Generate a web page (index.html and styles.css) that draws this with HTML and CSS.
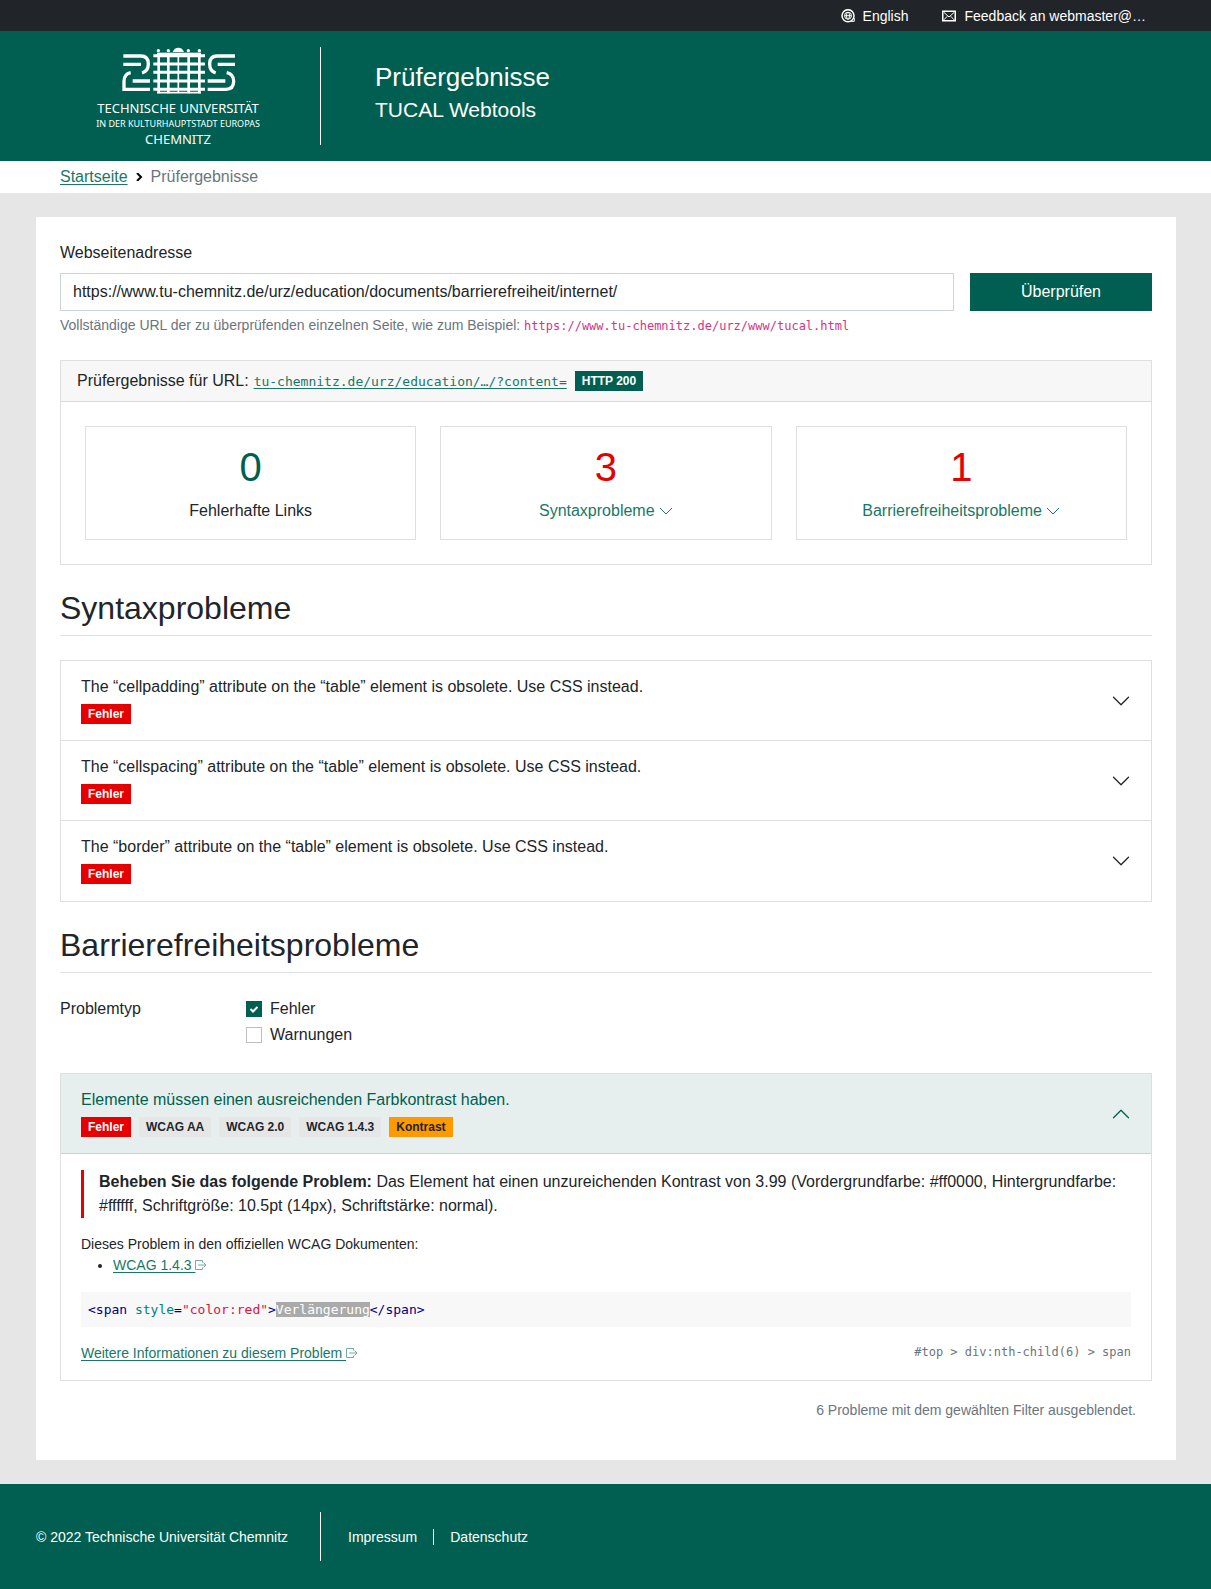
FILE: index.html
```html
<!DOCTYPE html>
<html lang="de">
<head>
    <meta charset="UTF-8">
    <meta name="viewport" content="width=device-width, initial-scale=1">
    <title>Prüfergebnisse | TUCAL Webtools</title>
    <link rel="stylesheet" href="styles.css">
</head>
<body>
<nav class="topbar">
    <a href="#en">
        <svg width="14" height="14" viewBox="0 0 14 14" fill="none" stroke="currentColor">
            <circle cx="7" cy="6.7" r="6" stroke-width="1.5"/>
            <circle cx="7" cy="6.7" r="3.5"/>
            <ellipse cx="7" cy="6.7" rx="1.5" ry="3.5"/>
            <path d="M3.5 6.7h7M9.5 12.3h3.8V9"/>
        </svg>
        English
    </a>
    <a href="#feedback">
        <svg width="14" height="12" viewBox="0 0 14 12" fill="none" stroke="currentColor">
            <rect x=".75" y="1.25" width="12.5" height="9.5" stroke-width="1.5"/>
            <path d="M2 2.5l5 4.5 5-4.5M2 9.8l3.2-3.5M12 9.8L8.8 6.3"/>
        </svg>
        Feedback an webmaster@…
    </a>
</nav>
<header class="header">
    <a class="logo" href="#home">
        <svg width="115" height="47" viewBox="120 49 345 141" fill="none" stroke="#fff" stroke-width="10">
            <path d="M127 76H180Q202 76 202 100Q202 121 183 127M127 101H180M149 126Q129 130 129 152V176H207M155 151H207"/>
            <path d="M217 75H372M217 100H372M217 125H372M217 151H372M217 176H372" stroke-width="9"/>
            <path d="M233 71V188M262 71V188M323 71V188M355 71V188" stroke-width="8"/>
            <path d="M292 71V188M228 186H360" stroke-width="5"/>
            <path d="M462 76H408Q386 76 386 100Q386 121 404 127M410 101H462M437 126Q458 130 458 152Q458 176 435 176H380M380 151H433"/>
            <g fill="#fff" stroke="none">
                <circle cx="232" cy="60" r="5"/>
                <circle cx="262" cy="60" r="5"/>
                <circle cx="322" cy="60" r="5"/>
                <circle cx="355" cy="60" r="5"/>
                <path d="M275 64Q280 51 292 51Q304 51 309 64Z"/>
                <rect x="228" y="66" width="132" height="9"/>
            </g>
        </svg>
        <span class="logo-name">TECHNISCHE UNIVERSITÄT</span>
        <span class="logo-sub">IN DER KULTURHAUPTSTADT EUROPAS</span>
        <span class="logo-name">CHEMNITZ</span>
    </a>
    <div class="header-title">
        <h1>Prüfergebnisse</h1>
        <p>TUCAL Webtools</p>
    </div>
</header>
<nav class="breadcrumb">
    <a href="#start">Startseite</a>
    <svg width="7" height="8" viewBox="0 0 7 8" fill="none" stroke="#000" stroke-width="2"><path d="M1 0l4 4-4 4"/></svg>
    <span>Prüfergebnisse</span>
</nav>

<main class="main">
    <form class="check-form">
        <label for="url">Webseitenadresse</label>
        <div class="check-row">
            <input type="text" id="url" value="https://www.tu-chemnitz.de/urz/education/documents/barrierefreiheit/internet/">
            <button type="button">Überprüfen</button>
        </div>
        <p class="help">Vollständige URL der zu überprüfenden einzelnen Seite, wie zum Beispiel: <code>https://www.tu-chemnitz.de/urz/www/tucal.html</code></p>
    </form>

    <section class="card">
        <div class="card-header">
            <span>Prüfergebnisse für URL:</span>
            <a href="#result"><code>tu-chemnitz.de/urz/education/…/?content=</code></a>
            <span class="badge badge-success">HTTP 200</span>
        </div>
        <div class="stats">
            <div class="stat">
                <div class="number ok">0</div>
                <div>Fehlerhafte Links</div>
            </div>
            <div class="stat">
                <div class="number">3</div>
                <a href="#syntax">Syntaxprobleme <svg width="14" height="14" viewBox="0 0 14 14" fill="none" stroke="currentColor"><path d="M1 4l6 6 6-6"/></svg></a>
            </div>
            <div class="stat">
                <div class="number">1</div>
                <a href="#a11y">Barrierefreiheitsprobleme <svg width="14" height="14" viewBox="0 0 14 14" fill="none" stroke="currentColor"><path d="M1 4l6 6 6-6"/></svg></a>
            </div>
        </div>
    </section>

    <h2 id="syntax">Syntaxprobleme</h2>
    <div class="accordion">
        <button type="button" class="accordion-button">
            <span>
                <span class="accordion-title">The “cellpadding” attribute on the “table” element is obsolete. Use CSS instead.</span>
                <span class="badges"><span class="badge badge-danger">Fehler</span></span>
            </span>
            <svg width="20" height="20" viewBox="0 0 16 16" fill="none" stroke="currentColor" stroke-linecap="round" stroke-linejoin="round"><path d="M2 5l6 6 6-6"/></svg>
        </button>
        <button type="button" class="accordion-button">
            <span>
                <span class="accordion-title">The “cellspacing” attribute on the “table” element is obsolete. Use CSS instead.</span>
                <span class="badges"><span class="badge badge-danger">Fehler</span></span>
            </span>
            <svg width="20" height="20" viewBox="0 0 16 16" fill="none" stroke="currentColor" stroke-linecap="round" stroke-linejoin="round"><path d="M2 5l6 6 6-6"/></svg>
        </button>
        <button type="button" class="accordion-button">
            <span>
                <span class="accordion-title">The “border” attribute on the “table” element is obsolete. Use CSS instead.</span>
                <span class="badges"><span class="badge badge-danger">Fehler</span></span>
            </span>
            <svg width="20" height="20" viewBox="0 0 16 16" fill="none" stroke="currentColor" stroke-linecap="round" stroke-linejoin="round"><path d="M2 5l6 6 6-6"/></svg>
        </button>
    </div>

    <h2 id="a11y">Barrierefreiheitsprobleme</h2>
    <div class="filter" role="group" aria-labelledby="filter-label">
        <span id="filter-label">Problemtyp</span>
        <div class="filter-options">
            <label><input type="checkbox" checked> Fehler</label>
            <label><input type="checkbox"> Warnungen</label>
        </div>
    </div>
    <div class="accordion">
        <button type="button" class="accordion-button open">
            <span>
                <span class="accordion-title">Elemente müssen einen ausreichenden Farbkontrast haben.</span>
                <span class="badges">
                    <span class="badge badge-danger">Fehler</span>
                    <span class="badge badge-light">WCAG AA</span>
                    <span class="badge badge-light">WCAG 2.0</span>
                    <span class="badge badge-light">WCAG 1.4.3</span>
                    <span class="badge badge-warning">Kontrast</span>
                </span>
            </span>
            <svg width="20" height="20" viewBox="0 0 16 16" fill="none" stroke="currentColor" stroke-linecap="round" stroke-linejoin="round"><path d="M2 11l6-6 6 6"/></svg>
        </button>
        <div class="accordion-body">
            <p class="callout"><strong>Beheben Sie das folgende Problem:</strong> Das Element hat einen unzureichenden Kontrast von 3.99 (Vordergrundfarbe: #ff0000, Hintergrundfarbe: #ffffff, Schriftgröße: 10.5pt (14px), Schriftstärke: normal).</p>
            <div class="docs">
                Dieses Problem in den offiziellen WCAG Dokumenten:
                <ul>
                    <li><a href="#wcag">WCAG 1.4.3 </a><svg width="12" height="10" viewBox="0 0 12 10" fill="none" stroke="currentColor"><path d="M7.5 2.5V.5h-7v9h7v-2M3 5h8M8.5 2.5L11 5 8.5 7.5"/></svg></li>
                </ul>
            </div>
            <pre class="code"><span class="tag">&lt;span</span> <span class="attr">style</span>=<span class="str">"color:red"</span><span class="tag">&gt;</span><mark>Verlängerung</mark><span class="tag">&lt;/span&gt;</span></pre>
            <div class="more">
                <span><a href="#more">Weitere Informationen zu diesem Problem </a><svg width="12" height="10" viewBox="0 0 12 10" fill="none" stroke="currentColor"><path d="M7.5 2.5V.5h-7v9h7v-2M3 5h8M8.5 2.5L11 5 8.5 7.5"/></svg></span>
                <code>#top &gt; div:nth-child(6) &gt; span</code>
            </div>
        </div>
    </div>
    <p class="hidden-count">6 Probleme mit dem gewählten Filter ausgeblendet.</p>
</main>

<footer class="footer">
    <div class="copyright">© 2022 Technische Universität Chemnitz</div>
    <a href="#impressum">Impressum</a>
    <a href="#datenschutz">Datenschutz</a>
</footer>
</body>
</html>
```
FILE: styles.css
```css
* {
    box-sizing: border-box;
}
body {
    margin: 0;
    background-color: #e6e6e6;
    color: #212529;
    font-family: "Liberation Sans", Arial, sans-serif;
    font-size: 16px;
    line-height: 24px;
}
h1, h2, p, ul, pre {
    margin: 0;
    font-weight: normal;
}
a {
    color: #177867;
    text-underline-offset: 2px;
}
input, button {
    font: inherit;
    color: inherit;
    border-radius: 0;
}
code, pre {
    font-family: "DejaVu Sans Mono", monospace;
    font-size: 13px;
}
code {
    line-height: 1;
}

.topbar {
    display: flex;
    justify-content: flex-end;
    align-items: center;
    gap: 34px;
    height: 31px;
    padding: 0 65px;
    background-color: #212529;
    font-size: 14px;
}
.topbar a {
    display: flex;
    align-items: center;
    gap: 8px;
    color: #fff;
    text-decoration: none;
}

.header {
    display: flex;
    align-items: flex-start;
    padding: 16px 36px;
    background-color: #005f50;
    color: #fff;
}
.logo {
    display: flex;
    flex-direction: column;
    align-items: center;
    width: 285px;
    height: 98px;
    border-right: 1px solid #fff;
    color: #fff;
    font-family: "Noto Sans", sans-serif;
    text-decoration: none;
}
.logo svg {
    flex: none;
    margin-bottom: 6px;
}
.logo-name {
    font-size: 13px;
    line-height: 17px;
}
.logo-sub {
    font-size: 9px;
    line-height: 14px;
}
.header-title {
    padding: 14px 0 0 54px;
}
.header-title h1 {
    font-size: 26px;
    line-height: 32px;
}
.header-title p {
    font-size: 21px;
    line-height: 33px;
}

.breadcrumb {
    display: flex;
    align-items: center;
    gap: 8px;
    padding: 4px 60px;
    background-color: #fff;
    color: #6c757d;
}

.main {
    margin: 24px 35px 24px 36px;
    padding: 24px 24px 39px;
    background-color: #fff;
}
.check-form label {
    display: block;
    margin-bottom: 8px;
}
.check-row {
    display: grid;
    grid-template-columns: 5fr 1fr;
    gap: 16px;
}
.check-row input {
    height: 38px;
    padding: 6px 12px;
    border: 1px solid #ced4da;
}
.check-row button {
    min-width: 182px;
    border: 0;
    background-color: #005f50;
    color: #fff;
}
.help {
    margin: 4px 0 24px;
    color: #6c757d;
    font-size: 14px;
    line-height: 21px;
}
.help code {
    color: #d63384;
    font-size: 12px;
}

.card {
    border: 1px solid #dfdfdf;
}
.card-header {
    display: flex;
    align-items: center;
    padding: 8px 16px;
    border-bottom: 1px solid #d8d8d8;
    background-color: #f7f7f7;
}
.card-header a {
    margin: 0 8px 0 5px;
}
.stats {
    display: grid;
    grid-template-columns: repeat(3, 1fr);
    gap: 24px;
    padding: 24px;
}
.stat {
    padding: 16px;
    border: 1px solid #dfdfdf;
    text-align: center;
}
.stat a {
    text-decoration: none;
}
.stat svg {
    vertical-align: -2px;
}
.number {
    margin-bottom: 8px;
    color: #e60000;
    font-size: 40px;
    line-height: 48px;
}
.number.ok {
    color: #005f50;
}

h2 {
    margin: 24px 0;
    padding-bottom: 8px;
    border-bottom: 1px solid #dee2e6;
    font-size: 32px;
    line-height: 38px;
}

.badges {
    display: flex;
    gap: 8px;
}
.badge {
    padding: 4px 7px;
    font-size: 12px;
    font-weight: bold;
    line-height: 12px;
}
.badge-success {
    background-color: #005f50;
    color: #fff;
}
.badge-danger {
    background-color: #e60000;
    color: #fff;
}
.badge-light {
    background-color: #e6e6e6;
    color: #212529;
}
.badge-warning {
    background-color: #ff9900;
    color: #212529;
}

.accordion {
    border: 1px solid #dfdfdf;
}
.accordion-button {
    display: flex;
    justify-content: space-between;
    align-items: center;
    width: 100%;
    padding: 16px 20px;
    border: 0;
    background-color: #fff;
    text-align: left;
}
.accordion-button + .accordion-button {
    border-top: 1px solid #dfdfdf;
}
.accordion-button:last-child {
    padding-bottom: 17px;
}
.accordion-button.open {
    border-bottom: 1px solid #c6d3d1;
    background-color: #e6efed;
    color: #005f50;
}
.accordion-title {
    display: block;
    margin-bottom: 8px;
    line-height: 19px;
}
.accordion-body {
    padding: 16px 20px;
    font-size: 14px;
    line-height: 21px;
}
.accordion-body svg {
    color: #74ac9f;
}

.filter {
    display: flex;
    margin-bottom: 24px;
}
.filter > span {
    width: 186px;
}
.filter label {
    display: flex;
    align-items: center;
    gap: 8px;
    margin-bottom: 2px;
}
.filter input {
    appearance: none;
    width: 16px;
    height: 16px;
    margin: 0;
    border: 1px solid #bfbfbf;
}
.filter input:checked {
    border-color: #005f50;
    background: #005f50 url("data:image/svg+xml,%3Csvg xmlns='http://www.w3.org/2000/svg' viewBox='0 0 14 14'%3E%3Cpath d='M3.5 7l2.5 2.5 4.5-4.5' fill='none' stroke='white' stroke-width='2'/%3E%3C/svg%3E");
}

.callout {
    margin-bottom: 16px;
    padding-left: 15px;
    border-left: 3px solid #e60000;
    font-size: 16px;
    line-height: 24px;
}
.docs ul {
    padding-left: 32px;
}
.code {
    margin: 16px 0;
    padding: 7px;
    background-color: #f8f8f8;
    color: #000080;
}
.code .attr {
    color: #008080;
}
.code .str {
    color: #dd1144;
}
.code mark {
    background-color: #aaa;
    color: #fff;
}
.more {
    display: flex;
    justify-content: space-between;
}
.more code {
    color: #6c757d;
    font-size: 12px;
    line-height: 18px;
}
.hidden-count {
    padding: 19px 16px 0;
    color: #6c757d;
    font-size: 14px;
    line-height: 21px;
    text-align: right;
}

.footer {
    display: flex;
    align-items: center;
    padding: 28px 36px;
    background-color: #005f50;
    color: #fff;
    font-size: 14px;
    line-height: 16px;
}
.copyright {
    width: 285px;
    margin-right: 27px;
    padding: 17px 0 16px;
    border-right: 1px solid #fff;
}
.footer a {
    color: #fff;
    text-decoration: none;
}
.footer a + a {
    margin-left: 16px;
    padding-left: 16px;
    border-left: 1px solid #fff;
}
```
